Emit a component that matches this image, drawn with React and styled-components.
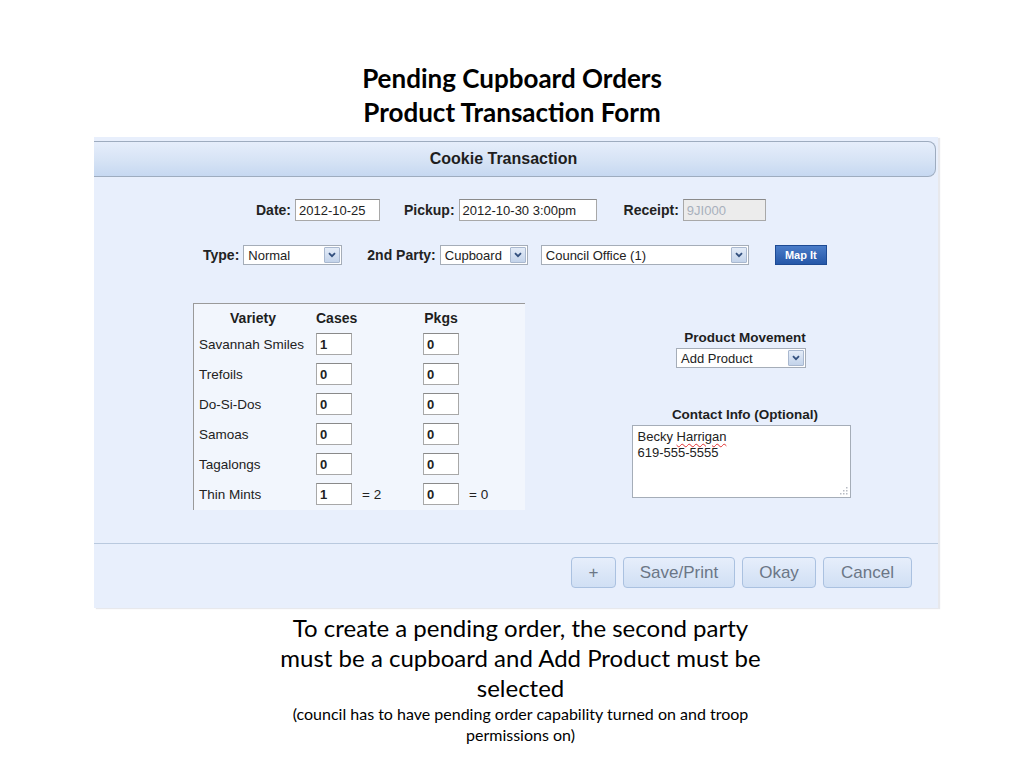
import styled, { createGlobalStyle } from "styled-components";

const GlobalStyle = createGlobalStyle`
  html, body {
    margin: 0;
    padding: 0;
    background: #ffffff;
  }
  body {
    font-family: "Liberation Sans", Arial, sans-serif;
  }
`;

const Page = styled.div`
  width: 1024px;
  height: 768px;
  overflow: hidden;
  padding-top: 61px;
  box-sizing: border-box;
`;

const SlideTitle = styled.h1`
  margin: 0 0 8px;
  font-family: Lato, "Open Sans", sans-serif;
  font-weight: 700;
  font-size: 26px;
  line-height: 34px;
  text-align: center;
  color: #000;
`;

const Panel = styled.div`
  margin-left: 94px;
  width: 844px;
  height: 471px;
  background: #e8effc;
  box-shadow: 2px 1px 1px rgba(120, 130, 150, 0.18);
  display: flex;
  flex-direction: column;
`;

const Header = styled.div`
  margin: 4px 2px 0 0;
  height: 36px;
  box-sizing: border-box;
  border: 1px solid #9eacbf;
  border-left: none;
  border-radius: 0 8px 8px 0;
  background: linear-gradient(#e6eefb, #d6e3f5 55%, #c6d8f1);
  display: flex;
  align-items: center;
  justify-content: center;
  font-weight: 700;
  font-size: 16px;
  color: #1e1e1e;
  padding-right: 22px;
`;

const FormRow = styled.div`
  display: flex;
  align-items: center;
  height: ${(p) => p.h}px;
  margin-top: ${(p) => p.top}px;
  padding-left: ${(p) => p.left}px;
`;

const Field = styled.div`
  display: flex;
  align-items: center;
  margin-right: ${(p) => p.gap ?? 24}px;
`;

const Label = styled.span`
  font-weight: 700;
  font-size: 14px;
  color: #222;
  margin-right: 4px;
`;

const TextBox = styled.div`
  width: ${(p) => p.w}px;
  height: 22px;
  box-sizing: border-box;
  border: 1px solid #a8a8a8;
  border-top-color: #8a8a8a;
  background: ${(p) => (p.disabled ? "#ececec" : "#ffffff")};
  color: ${(p) => (p.disabled ? "#a8b0bc" : "#222")};
  font-size: 13px;
  font-weight: ${(p) => (p.bold ? 700 : 400)};
  padding-left: 3px;
  display: flex;
  align-items: center;
  white-space: nowrap;
`;

const SelectBox = styled.div`
  width: ${(p) => p.w}px;
  height: 20px;
  box-sizing: border-box;
  border: 1px solid #a5adb8;
  background: #ffffff;
  display: flex;
  align-items: center;
  font-size: 13px;
  color: #222;
`;

const SelectText = styled.span`
  flex: 1;
  padding-left: 4px;
  white-space: nowrap;
  overflow: hidden;
`;

const ArrowBox = styled.span`
  width: 16px;
  height: 16px;
  margin-right: 1px;
  box-sizing: border-box;
  border: 1px solid #a9b8cf;
  border-radius: 1px;
  background: linear-gradient(#e4ecf8, #c3d3ea);
  display: flex;
  align-items: center;
  justify-content: center;
`;

const Chevron = () => (
  <svg width="8" height="6" viewBox="0 0 8 6">
    <path d="M1 1.2 L4 4.2 L7 1.2" fill="none" stroke="#33507e" strokeWidth="1.8" />
  </svg>
);

const Select = ({ w, children }) => (
  <SelectBox w={w}>
    <SelectText>{children}</SelectText>
    <ArrowBox>
      <Chevron />
    </ArrowBox>
  </SelectBox>
);

const MapButton = styled.div`
  margin-left: 2px;
  width: 52px;
  height: 20px;
  box-sizing: border-box;
  border: 1px solid #1d4a93;
  background: linear-gradient(#4a7cc8, #2557a8);
  color: #fff;
  font-weight: 700;
  font-size: 11px;
  display: flex;
  align-items: center;
  justify-content: center;
`;

const Main = styled.div`
  display: flex;
  margin-top: 38px;
  padding-left: 99px;
  height: 207px;
`;

const Table = styled.div`
  width: 332px;
  box-sizing: border-box;
  border-top: 1px solid #9a9a9a;
  border-left: 1px solid #9a9a9a;
  background: #f2f6fd;
  padding-top: 3px;
`;

const TableRow = styled.div`
  display: grid;
  grid-template-columns: 122px 36px 71px 36px 1fr;
  align-items: center;
  height: ${(p) => (p.head ? 22 : 30)}px;
`;

const Head = styled.span`
  font-weight: 700;
  font-size: 14px;
  color: #1e1e1e;
  text-align: center;
  white-space: nowrap;
  margin-left: ${(p) => p.shift ?? 0}px;
`;

const Variety = styled.span`
  font-size: 13.5px;
  color: #222;
  padding-left: 5px;
  white-space: nowrap;
`;

const Total = styled.span`
  font-size: 13.5px;
  color: #222;
  padding-left: 10px;
  white-space: nowrap;
`;

const Side = styled.div`
  margin-left: 106px;
  margin-top: 28px;
  width: 220px;
  display: flex;
  flex-direction: column;
  align-items: center;
`;

const SideLabel = styled.div`
  font-weight: 700;
  font-size: 13.5px;
  color: #1e1e1e;
  line-height: 14px;
  margin: ${(p) => p.m};
  padding-left: 8px;
`;

const TextArea = styled.div`
  position: relative;
  width: 219px;
  height: 73px;
  box-sizing: border-box;
  border: 1px solid #a5adb8;
  background: #fff;
  font-size: 13px;
  line-height: 16px;
  color: #222;
  padding: 3px 5px;
`;

const Misspelled = styled.span`
  text-decoration: underline wavy #e03030;
  text-decoration-thickness: 1px;
  text-underline-offset: 2px;
`;

const Grip = styled.svg`
  position: absolute;
  right: 2px;
  bottom: 2px;
`;

const Footer = styled.div`
  margin-top: 33px;
  border-top: 1px solid #b9c9de;
  padding: 13px 26px 0 0;
  display: flex;
  justify-content: flex-end;
  gap: 7px;
`;

const Button = styled.div`
  width: ${(p) => p.w}px;
  height: 31px;
  box-sizing: border-box;
  border: 1px solid #aac1e0;
  border-radius: 4px;
  background: linear-gradient(#e6eefb, #d0dff4);
  color: #6b7686;
  font-size: 17px;
  display: flex;
  align-items: center;
  justify-content: center;
`;

const Caption = styled.div`
  margin-top: 5px;
  padding-left: 17px;
  text-align: center;
  font-family: Lato, "Open Sans", sans-serif;
  color: #000;
`;

const CaptionMain = styled.div`
  width: 490px;
  margin: 0 auto;
  font-size: 24px;
  line-height: 30px;
`;

const CaptionNote = styled.div`
  width: 480px;
  margin: 0 auto;
  font-size: 16px;
  line-height: 21px;
`;

const cookies = [
  ["Savannah Smiles", "1", "0"],
  ["Trefoils", "0", "0"],
  ["Do-Si-Dos", "0", "0"],
  ["Samoas", "0", "0"],
  ["Tagalongs", "0", "0"],
  ["Thin Mints", "1", "0", "= 2", "= 0"],
];

export default function App() {
  return (
    <Page>
      <GlobalStyle />
      <SlideTitle>
        Pending Cupboard Orders
        <br />
        Product Transaction Form
      </SlideTitle>
      <Panel>
        <Header>Cookie Transaction</Header>
        <FormRow h={22} top={22} left={162}>
          <Field>
            <Label>Date:</Label>
            <TextBox w={85}>2012-10-25</TextBox>
          </Field>
          <Field gap={27}>
            <Label>Pickup:</Label>
            <TextBox w={138}>2012-10-30 3:00pm</TextBox>
          </Field>
          <Field>
            <Label>Receipt:</Label>
            <TextBox w={83} disabled>
              9JI000
            </TextBox>
          </Field>
        </FormRow>
        <FormRow h={20} top={24} left={109}>
          <Field gap={25}>
            <Label>Type:</Label>
            <Select w={99}>Normal</Select>
          </Field>
          <Field gap={13}>
            <Label>2nd Party:</Label>
            <Select w={88}>Cupboard</Select>
          </Field>
          <Field gap={24}>
            <Select w={208}>Council Office (1)</Select>
          </Field>
          <MapButton>Map It</MapButton>
        </FormRow>
        <Main>
          <Table>
            <TableRow head>
              <Head shift={-4}>Variety</Head>
              <Head>Cases</Head>
              <span />
              <Head>Pkgs</Head>
              <span />
            </TableRow>
            {cookies.map(([name, cases, pkgs, caseTotal, pkgTotal]) => (
              <TableRow key={name}>
                <Variety>{name}</Variety>
                <TextBox w={36} bold>
                  {cases}
                </TextBox>
                <Total>{caseTotal}</Total>
                <TextBox w={36} bold>
                  {pkgs}
                </TextBox>
                <Total>{pkgTotal}</Total>
              </TableRow>
            ))}
          </Table>
          <Side>
            <SideLabel m="0 0 3px">Product Movement</SideLabel>
            <Select w={130}>Add Product</Select>
            <SideLabel m="40px 0 3px">Contact Info (Optional)</SideLabel>
            <TextArea>
              Becky <Misspelled>Harrigan</Misspelled>
              <br />
              619-555-5555
              <Grip width="9" height="9" viewBox="0 0 9 9">
                <g fill="#b8bcc4">
                  <rect x="7" y="1" width="1.5" height="1.5" />
                  <rect x="4" y="4" width="1.5" height="1.5" />
                  <rect x="7" y="4" width="1.5" height="1.5" />
                  <rect x="1" y="7" width="1.5" height="1.5" />
                  <rect x="4" y="7" width="1.5" height="1.5" />
                  <rect x="7" y="7" width="1.5" height="1.5" />
                </g>
              </Grip>
            </TextArea>
          </Side>
        </Main>
        <Footer>
          <Button w={45}>+</Button>
          <Button w={112}>Save/Print</Button>
          <Button w={74}>Okay</Button>
          <Button w={89}>Cancel</Button>
        </Footer>
      </Panel>
      <Caption>
        <CaptionMain>
          To create a pending order, the second party must be a cupboard and Add
          Product must be selected
        </CaptionMain>
        <CaptionNote>
          (council has to have pending order capability turned on and troop
          permissions on)
        </CaptionNote>
      </Caption>
    </Page>
  );
}
